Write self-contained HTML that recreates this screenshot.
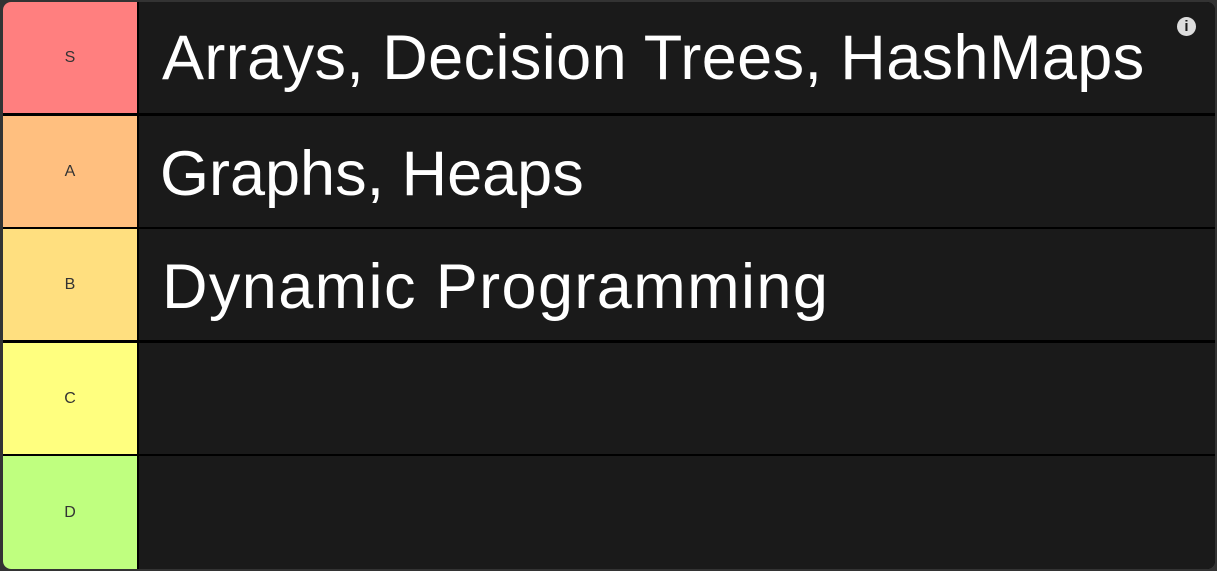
<!DOCTYPE html>
<html><head><style>
body{margin:0;background:#333;width:1217px;height:571px;overflow:hidden;font-family:"Liberation Sans",sans-serif}
.wrap{position:absolute;left:3px;top:2px;width:1212px;height:567px;background:#000;border-radius:8px;overflow:hidden}
.row{position:absolute;left:0;width:1212px;height:111px;display:flex}
.lab{width:134px;height:100%;display:flex;align-items:center;justify-content:center;font-size:16px;color:#333}
.cnt{flex:1;margin-left:2px;background:#1a1a1a;color:#fff;font-size:63px;line-height:116px;height:111px;overflow:hidden;padding-left:23px;white-space:nowrap;letter-spacing:0.4px}
.info{position:absolute;right:19px;top:15px;width:19px;height:19px;border-radius:50%;background:#ddd;color:#1a1a1a;font-weight:bold;font-size:15px;text-align:center;line-height:19px}
</style></head><body>
<div class="wrap">
<div class="row" style="top:0"><div class="lab" style="background:#ff7f7f">S</div><div class="cnt" style="line-height:112px">Arrays, Decision Trees, HashMaps</div></div>
<div class="row" style="top:114px"><div class="lab" style="background:#ffbf7f">A</div><div class="cnt" style="padding-left:21px;letter-spacing:0">Graphs, Heaps</div></div>
<div class="row" style="top:227px"><div class="lab" style="background:#ffdf7f">B</div><div class="cnt" style="letter-spacing:1.4px">Dynamic Programming</div></div>
<div class="row" style="top:341px"><div class="lab" style="background:#ffff7f">C</div><div class="cnt"></div></div>
<div class="row" style="top:454px;height:113px"><div class="lab" style="background:#bfff7f">D</div><div class="cnt" style="height:113px"></div></div>
<div class="info">i</div>
</div>
</body></html>
